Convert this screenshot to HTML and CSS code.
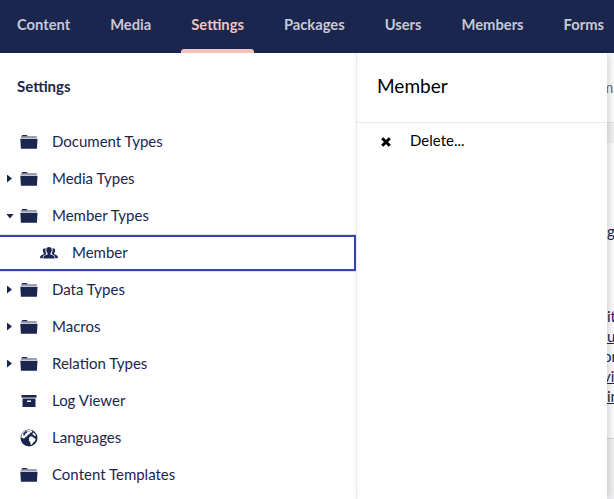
FILE: index.html
```html
<!DOCTYPE html>
<html lang="en">
<head>
<meta charset="utf-8">
<title>Settings</title>
<link rel="stylesheet" href="styles.css">
</head>
<body>
<svg class="sprite" aria-hidden="true">
  <symbol id="folder" viewBox="0 0 18 16">
    <path d="M1.500 2.200Q2 .9 3 .9h3.300q.8 0 1.200.8l.2.500z"/>
    <path class="soft" d="M1 2.200h15.800v1.600H1z"/>
    <path d="M.3 4.700h17.200l-.6 10.100H.9z"/>
  </symbol>
  <symbol id="people" viewBox="0 0 18 12">
    <path d="M9 0c1.900 0 2.900 1.200 2.700 3.200-.1 1.500-.7 2.400-1.300 3v1.200l3.400 1.400c.7.400.8 1.200.8 2.700H3.400c0-1.500.1-2.300.8-2.700l3.400-1.400V6.200C7 5.600 6.400 4.700 6.300 3.200 6.100 1.200 7.100 0 9 0z"/>
    <path d="M5.500 1.200C3.700.9 2.700 2 2.900 3.700c.1 1.200.5 1.900 1 2.400v1L1 8.500c-.7.400-.9 1.600-.9 2.700h2.600c.1-1.700.4-2.500 1.300-3l2.500-1.100C5.600 5.700 5.100 3.400 5.500 1.200zM12.500 1.200c1.800-.3 2.800.8 2.600 2.500-.1 1.200-.5 1.900-1 2.400v1L17 8.500c.7.400.9 1.600.9 2.700h-2.600c-.1-1.700-.4-2.500-1.300-3l-2.500-1.100c.9-1.400 1.400-3.700 1-5.900z"/>
  </symbol>
  <symbol id="box" viewBox="0 0 16 12">
    <path d="M.5 0h15v2.600H.5z"/>
    <path fill-rule="evenodd" d="M1.500 3.500h13V12h-13zM6 5.500v1.600h4V5.500z"/>
  </symbol>
  <symbol id="globe" viewBox="0 0 18 18">
    <circle cx="9" cy="9" r="8.500"/>
    <path class="land" d="M7 1.300l3.200-.2 2.400 1-1 1.400-1.500.2-.5 1.400-2 .8-.6 1.500-1.700.3-.2 1.200-1.900.6-1.300-1L1.300 9C1.200 5.200 3.600 2.300 7 1.300zM9.300 8.300l1.500-1 1.800.5 1.200 1.300 1.800.6-.6 2.200-1.700 1.500-1.400 2-1.200.5-.3-2.500-1.400-1.800zM13.500 3.400l1.700 1.500.8 1.800-1.600.3-1-1.300-1.200-.7z"/>
    <path d="M3.200 4.500l2-2 2.600-.4-.7 1.300-1.600 1-.6 1.600-1.300.9zM8.300 2.600l1.700-.4-.5 1z"/>
  </symbol>
</svg>
<div class="app">
  <nav class="topbar">
    <a>Content</a><a>Media</a><a class="active">Settings</a><a>Packages</a><a>Users</a><a>Members</a><a>Forms</a>
  </nav>
  <div class="workspace">
    <aside class="tree">
      <h5>Settings</h5>
      <ul>
        <li><i></i><svg class="icon"><use href="#folder"/></svg><span>Document Types</span></li>
        <li><i class="closed"></i><svg class="icon"><use href="#folder"/></svg><span>Media Types</span></li>
        <li><i class="open"></i><svg class="icon"><use href="#folder"/></svg><span>Member Types</span></li>
        <li class="selected"><i></i><svg class="icon people"><use href="#people"/></svg><span>Member</span></li>
        <li><i class="closed"></i><svg class="icon"><use href="#folder"/></svg><span>Data Types</span></li>
        <li><i class="closed"></i><svg class="icon"><use href="#folder"/></svg><span>Macros</span></li>
        <li><i class="closed"></i><svg class="icon"><use href="#folder"/></svg><span>Relation Types</span></li>
        <li><i></i><svg class="icon box"><use href="#box"/></svg><span>Log Viewer</span></li>
        <li><i></i><svg class="icon globe"><use href="#globe"/></svg><span>Languages</span></li>
        <li><i></i><svg class="icon"><use href="#folder"/></svg><span>Content Templates</span></li>
      </ul>
    </aside>
    <section class="actions">
      <h1>Member</h1>
      <button><svg class="cross" viewBox="0 0 10 10"><path d="M1.200 1.200l7.600 7.600M8.800 1.200L1.200 8.800"/></svg><span>Delete...</span></button>
    </section>
    <main class="editor">
      <header>m</header>
      <div class="card">
        <p class="lead">g</p>
        <p>it</p>
        <p><u>u</u></p>
        <p class="cut">or</p>
        <p class="cut"><u>vi</u></p>
        <p><u>in</u></p>
      </div>
    </main>
  </div>
</div>
</body>
</html>
```

FILE: styles.css
```css
* { box-sizing: border-box; }
body { margin: 0; font: 15px/20px Lato, "Liberation Sans", sans-serif; color: #1b264f; background: #fff; overflow: hidden; }
.sprite { position: absolute; width: 0; height: 0; }
.app { display: flex; flex-direction: column; width: 614px; height: 499px; overflow: hidden; }
.topbar { display: flex; flex: none; height: 53px; padding-left: 7px; background: #1b264f; color: #c6c9d3; font-size: 14.72px; font-weight: 700; overflow: hidden; }
.topbar a { flex: none; display: flex; flex-direction: column; padding: 14px 10px 0; margin-right: 20px; }
.topbar .active { color: #f5c1bc; }
.topbar .active::after { content: ""; height: 4px; margin: auto -10px 0; border-radius: 3px 3px 0 0; background: #f5c1bc; }
.workspace { display: flex; flex: 1; min-height: 0; }
.tree { flex: none; width: 356px; }
h5 { margin: 0; padding: 23px 17px 0; height: 70px; font-size: 15px; line-height: 20px; font-weight: 700; }
ul { list-style: none; margin: 0; padding: 0; }
li { display: flex; align-items: center; height: 37px; }
li span { margin-top: -1px; }
li i { flex: none; width: 20px; height: 8px; }
li i.closed::before, li i.open::before { content: ""; display: block; background: #1b264f; }
li i.closed::before { width: 5px; height: 8px; margin-left: 7px; clip-path: polygon(0 0, 100% 50%, 0 100%); }
li i.open::before { width: 8px; height: 5px; margin: 2px 0 0 6px; clip-path: polygon(0 0, 100% 0, 50% 100%); }
li i.open { display: flow-root; }
.icon { flex: none; width: 18px; height: 16px; margin-right: 14px; fill: #1b264f; }
.soft { opacity: .55; }
.land { fill: #fff; }
.people { height: 12px; margin-right: 14px; }
.box { height: 12px; }
.globe { height: 18px; }
.selected { position: relative; padding-left: 20px; }
.selected::after { content: ""; position: absolute; inset: 1px 0 0; border: 2px solid #3544b1; border-left: 0; box-shadow: 0 0 1px #3544b1; }
.actions { position: relative; z-index: 1; flex: none; width: 251px; background: #fff; border-left: 1px solid #e9e9eb; box-shadow: 3px 0 7px rgba(0,0,0,.16); color: #000; }
h1 { margin: 0; height: 70px; padding: 20px 20px 0; font-size: 19px; line-height: 26px; font-weight: 400; border-bottom: 1px solid #e9e9eb; }
button { display: flex; align-items: center; width: 100%; height: 36px; padding: 0 24px; border: 0; background: none; font: inherit; color: inherit; }
button span { margin-top: -2px; }
.cross { width: 10px; height: 10px; margin: 2px 19px 0 0; fill: none; stroke: #000; stroke-width: 3; }
.editor { flex: 1; min-width: 0; overflow: hidden; background: #f3f3f5; color: #1b264f; }
.editor header { height: 70px; padding: 24px 0 0; margin-left: -6px; background: #fff; border-bottom: 1px solid #e9e9eb; color: #68768f; }
.card { height: 296px; margin-top: 20px; padding-top: 78px; background: #fff; border-bottom: 1px solid #d8d7d9; }
.card p { margin: 0; height: 20px; }
.card .lead { height: 85px; }
.card .cut { margin-left: -4px; }
```
